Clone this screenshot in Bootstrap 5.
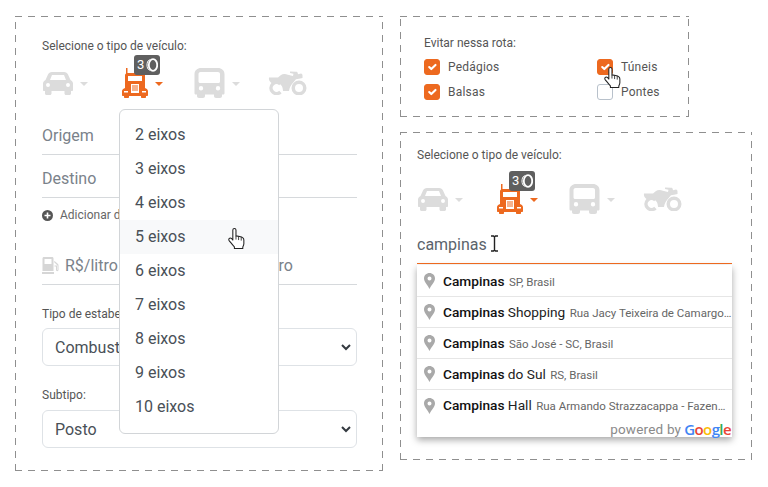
<!doctype html>
<html lang="pt-BR">
<head>
<meta charset="utf-8">
<title>Rotas</title>
<link href="https://cdn.jsdelivr.net/npm/bootstrap@5.3.0/dist/css/bootstrap.min.css" rel="stylesheet">
<style>
html,body{height:487px;overflow:hidden;background:#fff}
body{font-family:Roboto,"Liberation Sans",sans-serif;color:#495057}
.stage{padding:16px 15px 0;gap:17px}
.dash{
  position:relative;
  background-image:
    repeating-linear-gradient(90deg,#8f8f8f 0 7px,transparent 7px 13px),
    repeating-linear-gradient(90deg,#8f8f8f 0 7px,transparent 7px 13px),
    repeating-linear-gradient(0deg,#8f8f8f 0 7px,transparent 7px 13px),
    repeating-linear-gradient(0deg,#8f8f8f 0 7px,transparent 7px 13px);
  background-size:100% 1px,100% 1px,1px 100%,1px 100%;
  background-position:0 0,0 100%,0 0,100% 0;
  background-repeat:no-repeat;
}
.box-main{width:368px;height:455px;padding:21px 26px 0 27px}
.side{gap:15px}
.box-avoid{width:289px;height:101px;padding:18px 24px 0}
.box-search{width:352px;height:328px;padding:14px 20px 0 17px}
.cap{font-size:12px;line-height:18px;color:#555}
.picker{height:30px;margin-top:13px}
.box-search .picker{margin-top:20px}
.veh{height:30px;position:relative}
.veh-car{width:80px;padding-left:1px}
.veh-truck{width:72px}
.veh-bus{width:74px}
.ic-grey{color:#dcdcdc}
.ic-orange{color:#ed691f}
.tri{width:0;height:0;border-left:4px solid transparent;border-right:4px solid transparent;border-top:4px solid currentColor;margin-left:7px;margin-top:1px}
.axle-tag{position:absolute;left:12px;top:-13px;width:26px;height:20px;background:#5f5f5f;border-radius:3px;color:#fff;font-size:13px;line-height:20px;padding-left:3px;gap:2px}
.line-field{height:38px;border-bottom:1px solid #d6d9dc;font-size:16px;line-height:37px;color:#7a828a}
.line-origin{margin-top:19px}
.line-dest{margin-top:5px}
.add-link{margin-top:8px;font-size:12px;line-height:18px;color:#666;gap:7px}
.line-price{margin-top:23px;gap:5px}
.price-a{width:165px}
.lbl-type{margin-top:20px;margin-bottom:5px}
.lbl-sub{margin-top:20px;margin-bottom:6px}
.form-select{color:#495057;height:38px;line-height:26px;padding-top:6px;padding-bottom:6px;
  background-image:url("data:image/svg+xml,%3csvg xmlns='http://www.w3.org/2000/svg' viewBox='0 0 10 7'%3e%3cpath fill='none' stroke='%23343a40' stroke-width='2' d='M1 1l4 4 4-4'/%3e%3c/svg%3e");
  background-size:10px 7px;background-position:right 5px center}
.axle-menu{display:block;position:absolute;left:104px;top:93px;width:160px;min-width:0;padding:8px 0 9px;margin:0;border-color:#d2d5d8;z-index:5}
.axle-menu .dropdown-item{height:34px;line-height:34px;padding:0 15px;font-size:16px;color:#495057}
.axle-hover{background:#f8f9fa}
.hand{position:absolute;z-index:9;width:17px;height:21px}
.hand-a{left:213px;top:212px}
.hand-b{left:204px;top:51px}
.chk-grid{display:grid;grid-template-columns:173px 1fr;row-gap:9px;margin-top:7px}
.chk-item{font-size:12px;line-height:16px;color:#555;gap:8px;letter-spacing:.2px}
.chk-item .form-check-input{width:16px;height:16px;margin:0;border-color:#b8c1cb;flex:none}
.chk-item .form-check-input:checked{background-color:#ed691f;border-color:#ed691f}
.search-val{height:38px;margin-top:12px;font-size:16px;line-height:38px;color:#5b636b;border-bottom:1px solid #ed691f;position:relative}
.ibeam{position:absolute;left:73px;top:9px;width:9px;height:17px}
.pac{margin-top:1px;width:315px;height:172px;padding-top:1px;background:#fff;box-shadow:0 3px 7px rgba(0,0,0,.35)}
.pac-row{height:31px;border-bottom:1px solid #e6e6e6;padding-left:7px;gap:8px;white-space:nowrap;overflow:hidden}
.pac-row svg{flex:none}
.pac-row:nth-child(5){border-bottom:0}
.pac-main{font-size:13.7px;color:#222}
.pac-main b{font-weight:500;color:#111}
.pac-sub{font-size:11.5px;color:#666;margin-left:1px}
.pac-foot{height:16px;font-size:13.5px;line-height:16px;color:#8a8a8a;gap:4px;padding-right:1px;letter-spacing:.2px}
.goog{font-family:"Open Sans",sans-serif;font-size:15px;font-weight:600;letter-spacing:-.6px;margin-left:-1px}
.g-b{color:#4285f4}.g-r{color:#ea4335}.g-y{color:#fbbc05}.g-g{color:#34a853}
</style>
</head>
<body>
<svg width="0" height="0" class="position-absolute">
  <symbol id="i-car" viewBox="0 0 30 23"><path fill="currentColor" fill-rule="evenodd" d="M9 0h12c2 0 3.300 1 4 2.500L27.500 8c1.500.8 2.500 2 2.500 3.500V18c0 .6-.4 1-1 1h-1v2.500c0 .8-.7 1.500-1.500 1.500H23c-.8 0-1.500-.7-1.500-1.500V19h-13v2.500C8.500 22.300 7.800 23 7 23H3.500C2.700 23 2 22.300 2 21.500V19H1c-.6 0-1-.4-1-1v-6.500C0 10 1 8.800 2.500 8L5 2.500C5.700 1 7 0 9 0zM9 3 7 8h16l-2-5zM5 11a2 2 0 1 0 0 4 2 2 0 0 0 0-4zm20 0a2 2 0 1 0 0 4 2 2 0 0 0 0-4z"/></symbol>
  <symbol id="i-truck" viewBox="0 0 26 30"><path fill="currentColor" fill-rule="evenodd" d="M4 0h1.500v5H21c1.200 0 2 .8 2 2v13l1 .5c1.300.6 2 1.500 2 3V27c0 .6-.4 1-1 1h-1v1c0 .6-.4 1-1 1h-3c-.6 0-1-.4-1-1v-1H7v1c0 .6-.4 1-1 1H3c-.6 0-1-.4-1-1v-1H1c-.6 0-1-.4-1-1v-3.500c0-1.500.7-2.400 2-3l1-.5V7c0-.4.400-1 1-1.500zM6 8v5h14V8zM9 16v9h8v-9zM2 23v1.500h4V23zm18 0v1.500h4V23z"/><path fill="currentColor" d="M10 17.500h6v1h-6zm0 2h6v1h-6zm0 2h6v1h-6z"/></symbol>
  <symbol id="i-bus" viewBox="0 0 31 30"><path fill="currentColor" fill-rule="evenodd" d="M7 0h17c3.500 0 6.500 2.500 6.500 6v19c0 1-.5 1.500-1.500 1.500h-1V28c0 1.200-.8 2-2 2h-4c-1.200 0-2-.8-2-2v-1.500H11V28c0 1.200-.8 2-2 2H5c-1.200 0-2-.8-2-2v-1.500H2c-1 0-1.500-.5-1.500-1.500V6C.5 2.500 3.500 0 7 0zM6.500 4C5.500 4 4.500 4.800 4.500 6v7.500c0 1 1 1.500 2 1.500H24c1 0 2-.5 2-1.500V6c0-1.200-1-2-2-2zM7 18a2.200 2.200 0 1 0 0 4.400A2.200 2.200 0 0 0 7 18zm17 0a2.200 2.200 0 1 0 0 4.400 2.200 2.200 0 0 0 0-4.400z"/></symbol>
  <symbol id="i-moto" viewBox="0 0 39 24"><path fill="none" stroke="currentColor" stroke-width="3.500" d="M12.400 13.100A5.500 5.500 0 1 0 12.400 20.900"/><path fill="currentColor" fill-rule="evenodd" d="M31 9.500a7.500 7.500 0 1 1 0 15 7.500 7.500 0 0 1 0-15zm0 3.500a4 4 0 1 0 0 8 4 4 0 0 0 0-8z"/><path fill="currentColor" d="M1 6.500h9L13 4c1.500-1 3-1.200 5-.8L25 5l.5-2.200L22 2V.5L28 .8c1 0 1.500.5 1.700 1.200l.3 1.200 3-.7c1 0 1.500 1 1.500 2v2.500l-3.500.8-3 .5-4 4.700c-1.500 1.700-2.500 4-3 6.900H15c0-4.500-2-7.500-6.500-8H3.500C1.500 10.500.5 8.500 1 6.500z"/></symbol>
  <symbol id="i-hand" viewBox="0 0 16 20"><path fill="#fff" stroke="#222" stroke-width="1" stroke-linejoin="round" d="M4.500 2C4.500 1 5.200.5 6 .5S7.500 1 7.500 2v5.500l3.500.7c2.500.5 4 1.300 4 3.300V15c0 1-.5 2-1 3v1.500H6V18c-1.500-1.500-3-3.500-5-6-.7-1-.3-2 .5-2.300 1-.4 2 .3 3 1.800z"/><path fill="none" stroke="#222" stroke-width=".8" d="M7.500 7.500V11M10 8v3.500M12.500 8.700V12"/></symbol>
  <symbol id="i-pin" viewBox="0 0 11 16"><path fill="#a9a9a9" fill-rule="evenodd" d="M5.500 0C8.500 0 11 2.400 11 5.400c0 3.200-3.600 6.400-5.500 10.600C3.600 11.800 0 8.600 0 5.400 0 2.400 2.500 0 5.500 0zm0 3.400a2 2 0 1 0 0 4 2 2 0 0 0 0-4z"/></symbol>
</svg>

<div class="stage d-flex align-items-start">
  <section class="dash box-main">
    <div class="cap">Selecione o tipo de veículo:</div>
    <div class="picker d-flex">
      <div class="veh veh-car d-flex align-items-center ic-grey"><svg width="30" height="23"><use href="#i-car"/></svg><span class="tri"></span></div>
      <div class="veh veh-truck d-flex align-items-center ic-orange"><svg width="26" height="30"><use href="#i-truck"/></svg><span class="tri"></span>
        <span class="axle-tag d-flex align-items-center">3<svg width="12" height="14" viewBox="0 0 12 14"><ellipse cx="7" cy="7" rx="4.200" ry="5.800" fill="none" stroke="#fff" stroke-width="1.800"/><path d="M3.500 1.500C1.500 3 1 5 1 7s.5 4 2.500 5.500" fill="none" stroke="#fff" stroke-width="1"/></svg></span>
      </div>
      <div class="veh veh-bus d-flex align-items-center ic-grey"><svg width="31" height="30"><use href="#i-bus"/></svg><span class="tri"></span></div>
      <div class="veh d-flex align-items-center ic-grey"><svg width="39" height="24"><use href="#i-moto"/></svg></div>
    </div>
    <div class="line-field line-origin">Origem</div>
    <div class="line-field line-dest">Destino</div>
    <div class="add-link d-flex align-items-center">
      <svg width="11" height="11" viewBox="0 0 11 11"><circle cx="5.500" cy="5.500" r="5.500" fill="#555"/><path d="M5.500 2.500v6M2.500 5.500h6" stroke="#fff" stroke-width="1.600"/></svg>
      <span>Adicionar destino</span>
    </div>
    <div class="line-field line-price d-flex align-items-center">
      <svg width="18" height="17" viewBox="0 0 18 17"><path fill="#d6d6d6" fill-rule="evenodd" d="M2 0h8c1 0 1.500.6 1.500 1.500V14H.5V1.500C.5.600 1 0 2 0zm.5 2v5h7V2zM0 15h12v2H0zM12.500 4l3 2.500c.6.500 1 1 1 2V13c0 1.500-2.500 1.500-2.500 0V9.500h-1.500v-1h2.500V13h.5V8.500L12 5z"/></svg>
      <span class="price-a">R$/litro</span><span>Km/litro</span>
    </div>
    <div class="cap lbl-type">Tipo de estabelecimento:</div>
    <select class="form-select" aria-label="Tipo"><option>Combustível</option></select>
    <div class="cap lbl-sub">Subtipo:</div>
    <select class="form-select" aria-label="Subtipo"><option>Posto</option></select>

    <ul class="dropdown-menu show axle-menu">
      <li><a class="dropdown-item" href="#">2 eixos</a></li>
      <li><a class="dropdown-item" href="#">3 eixos</a></li>
      <li><a class="dropdown-item" href="#">4 eixos</a></li>
      <li><a class="dropdown-item axle-hover" href="#">5 eixos</a></li>
      <li><a class="dropdown-item" href="#">6 eixos</a></li>
      <li><a class="dropdown-item" href="#">7 eixos</a></li>
      <li><a class="dropdown-item" href="#">8 eixos</a></li>
      <li><a class="dropdown-item" href="#">9 eixos</a></li>
      <li><a class="dropdown-item" href="#">10 eixos</a></li>
    </ul>
    <svg class="hand hand-a"><use href="#i-hand"/></svg>
  </section>

  <div class="side d-flex flex-column">
    <section class="dash box-avoid">
      <div class="cap">Evitar nessa rota:</div>
      <div class="chk-grid">
        <label class="chk-item d-flex align-items-center"><input class="form-check-input" type="checkbox" checked>Pedágios</label>
        <label class="chk-item d-flex align-items-center"><input class="form-check-input" type="checkbox" checked>Túneis</label>
        <label class="chk-item d-flex align-items-center"><input class="form-check-input" type="checkbox" checked>Balsas</label>
        <label class="chk-item d-flex align-items-center"><input class="form-check-input" type="checkbox">Pontes</label>
      </div>
      <svg class="hand hand-b"><use href="#i-hand"/></svg>
    </section>

    <section class="dash box-search">
      <div class="cap">Selecione o tipo de veículo:</div>
      <div class="picker d-flex">
        <div class="veh veh-car d-flex align-items-center ic-grey"><svg width="30" height="23"><use href="#i-car"/></svg><span class="tri"></span></div>
        <div class="veh veh-truck d-flex align-items-center ic-orange"><svg width="26" height="30"><use href="#i-truck"/></svg><span class="tri"></span>
          <span class="axle-tag d-flex align-items-center">3<svg width="12" height="14" viewBox="0 0 12 14"><ellipse cx="7" cy="7" rx="4.200" ry="5.800" fill="none" stroke="#fff" stroke-width="1.800"/><path d="M3.500 1.500C1.500 3 1 5 1 7s.5 4 2.500 5.500" fill="none" stroke="#fff" stroke-width="1"/></svg></span>
        </div>
        <div class="veh veh-bus d-flex align-items-center ic-grey"><svg width="31" height="30"><use href="#i-bus"/></svg><span class="tri"></span></div>
        <div class="veh d-flex align-items-center ic-grey"><svg width="39" height="24"><use href="#i-moto"/></svg></div>
      </div>
      <div class="search-val">campinas
        <svg class="ibeam" viewBox="0 0 9 17"><path fill="none" stroke="#fff" stroke-width="3.500" d="M1 1h2.500l1 1 1-1H8M1 16h2.500l1-1 1 1H8M4.500 2v13"/><path fill="none" stroke="#222" stroke-width="1.400" d="M1 1h2.500l1 1 1-1H8M1 16h2.500l1-1 1 1H8M4.500 2v13"/></svg>
      </div>
      <div class="pac">
        <div class="pac-row d-flex align-items-center"><svg width="11" height="16"><use href="#i-pin"/></svg><span class="pac-main"><b>Campinas</b> <span class="pac-sub">SP, Brasil</span></span></div>
        <div class="pac-row d-flex align-items-center"><svg width="11" height="16"><use href="#i-pin"/></svg><span class="pac-main"><b>Campinas</b> Shopping <span class="pac-sub">Rua Jacy Teixeira de Camargo…</span></span></div>
        <div class="pac-row d-flex align-items-center"><svg width="11" height="16"><use href="#i-pin"/></svg><span class="pac-main"><b>Campinas</b> <span class="pac-sub">São José - SC, Brasil</span></span></div>
        <div class="pac-row d-flex align-items-center"><svg width="11" height="16"><use href="#i-pin"/></svg><span class="pac-main"><b>Campinas</b> do Sul <span class="pac-sub">RS, Brasil</span></span></div>
        <div class="pac-row d-flex align-items-center"><svg width="11" height="16"><use href="#i-pin"/></svg><span class="pac-main"><b>Campinas</b> Hall <span class="pac-sub">Rua Armando Strazzacappa - Fazen…</span></span></div>
        <div class="pac-foot d-flex justify-content-end align-items-center"><span>powered by</span><span class="goog"><span class="g-b">G</span><span class="g-r">o</span><span class="g-y">o</span><span class="g-b">g</span><span class="g-g">l</span><span class="g-r">e</span></span></div>
      </div>
    </section>
  </div>
</div>
<script src="https://cdn.jsdelivr.net/npm/bootstrap@5.3.0/dist/js/bootstrap.bundle.min.js"></script>
</body>
</html>
